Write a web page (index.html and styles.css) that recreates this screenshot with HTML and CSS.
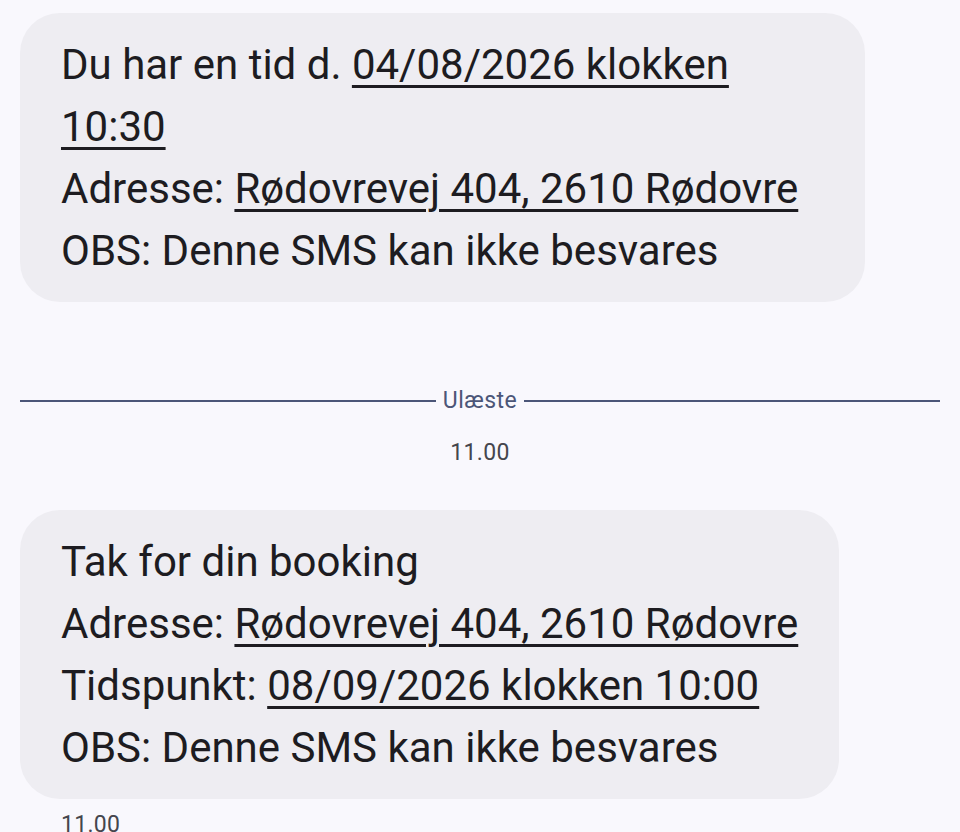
FILE: index.html
```html
<!DOCTYPE html>
<html lang="da">
<head>
<meta charset="utf-8">
<link rel="stylesheet" href="styles.css">
</head>
<body>
<main class="thread">
  <div class="bubble bubble--wide">
    <p class="line">Du har en tid d. <span class="link">04/08/2026 klokken<br>10:30</span></p>
    <p class="line">Adresse: <span class="link">Rødovrevej 404, 2610 Rødovre</span></p>
    <p class="line">OBS: Denne SMS kan ikke besvares</p>
  </div>

  <div class="divider">
    <span class="divider__rule"></span>
    <span class="divider__label">Ulæste</span>
    <span class="divider__rule"></span>
  </div>

  <div class="time time--center">11.00</div>

  <div class="bubble">
    <p class="line">Tak for din booking</p>
    <p class="line">Adresse: <span class="link">Rødovrevej 404, 2610 Rødovre</span></p>
    <p class="line">Tidspunkt: <span class="link">08/09/2026 klokken 10:00</span></p>
    <p class="line">OBS: Denne SMS kan ikke besvares</p>
  </div>

  <div class="time time--left">11.00</div>
</main>
</body>
</html>
```

FILE: styles.css
```css
* { box-sizing: border-box; }

html, body {
  margin: 0;
  padding: 0;
  background: #f9f8fd;
  height: 100%;
  overflow: hidden;
}

body {
  font-family: Roboto, "Noto Sans", sans-serif;
  color: #1d1c21;
}

.thread {
  padding: 13px 20px 0 20px;
  display: flex;
  flex-direction: column;
  align-items: flex-start;
}

.bubble {
  background: #eeedf2;
  border-radius: 40px;
  padding: 21px 41px 20px 41px;
  max-width: 845px;
  width: fit-content;
}

.bubble--wide {
  width: 845px;
}

.line {
  margin: 0;
  font-size: 42px;
  line-height: 62px;
  white-space: nowrap;
}

.link {
  text-decoration: underline;
  text-decoration-thickness: 3px;
  text-underline-offset: 6px;
}

.divider {
  align-self: stretch;
  display: flex;
  align-items: center;
  gap: 7px;
  margin-top: 85px;
}

.divider__rule {
  flex: 1;
  height: 2px;
  background: #4c5678;
}

.divider__label {
  font-size: 23px;
  line-height: 28px;
  letter-spacing: 0.5px;
  color: #4c5678;
}

.time {
  font-size: 23px;
  line-height: 28px;
  letter-spacing: 0.3px;
  color: #45464d;
}

.time--center {
  align-self: center;
  margin-top: 24px;
  margin-bottom: 43px;
}

.time--left {
  margin-top: 12px;
  margin-left: 41px;
}
```
